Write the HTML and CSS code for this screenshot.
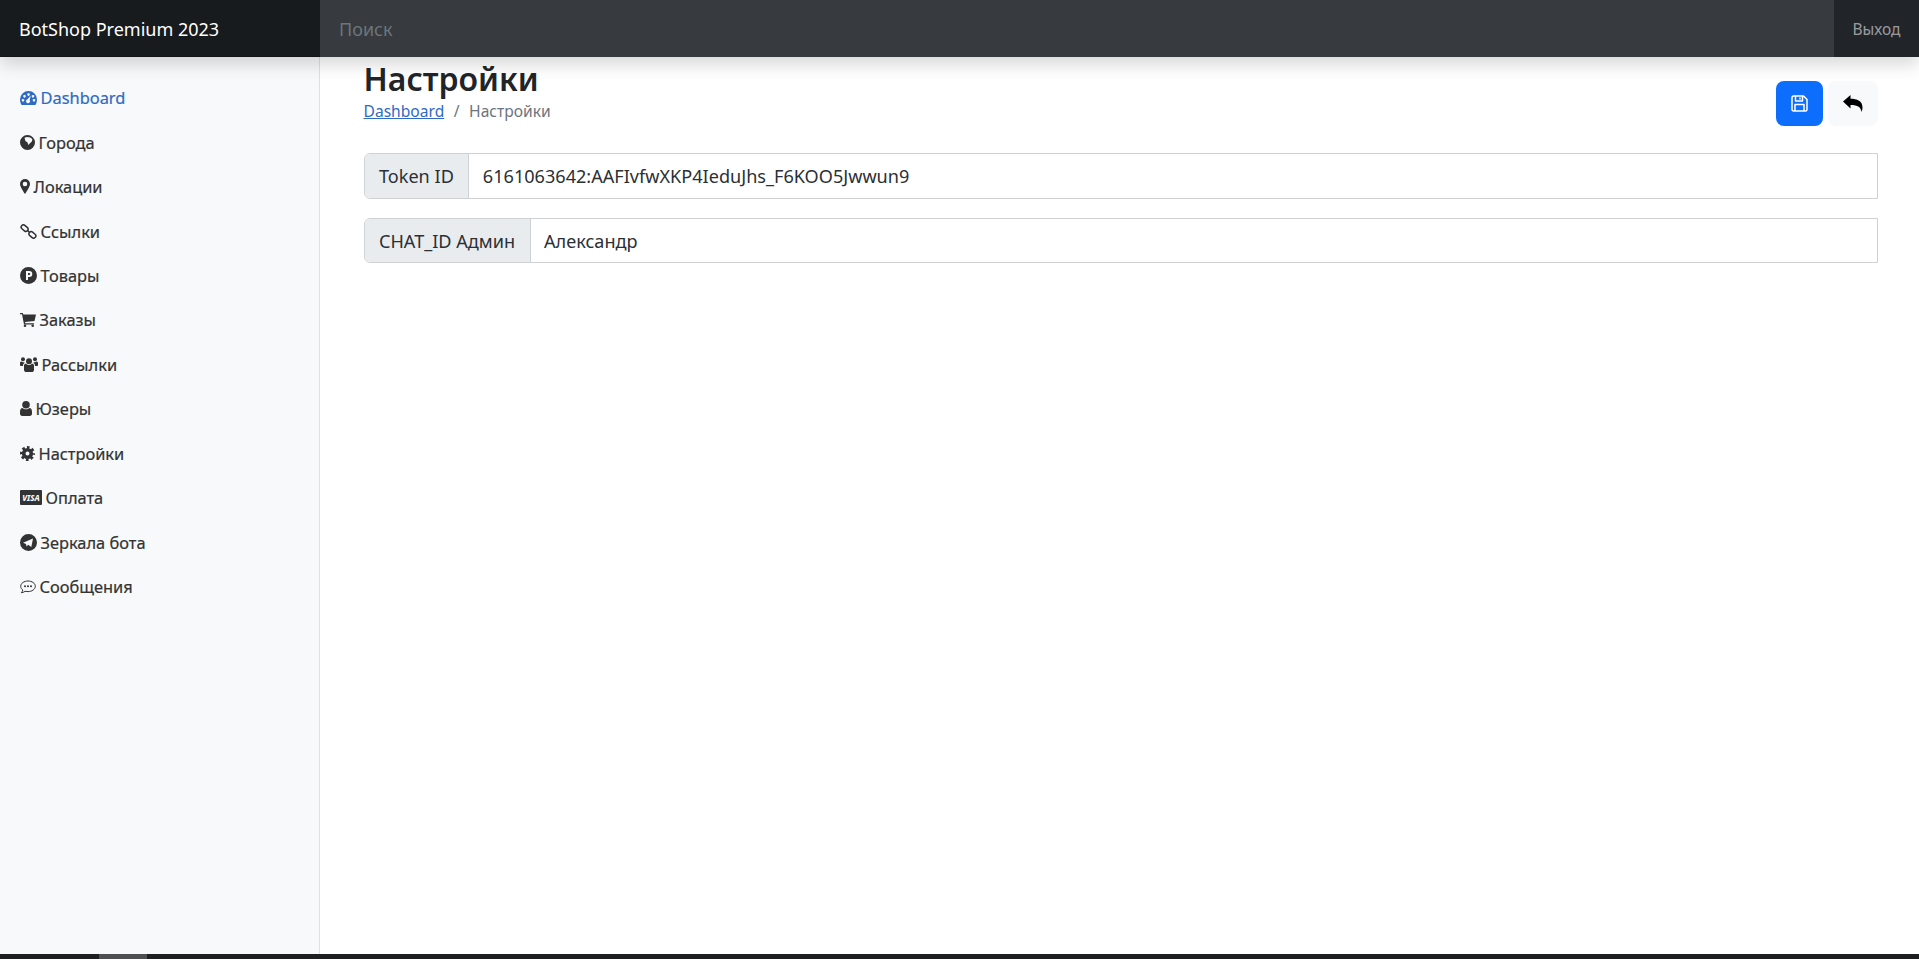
FILE: index.html
```html
<!DOCTYPE html>
<html lang="ru">
<head>
<meta charset="utf-8">
<title>BotShop Premium 2023</title>
<link rel="stylesheet" href="styles.css">
</head>
<body>
<div class="app">
  <header class="topbar">
    <a class="brand" href="#">BotShop Premium 2023</a>
    <input class="search" type="text" placeholder="Поиск">
    <a class="logout" href="#">Выход</a>
  </header>
  <div class="body">
    <nav class="sidebar">
      <a class="nav-link active" href="#"><svg width="17" height="14" viewBox="0 0 17 14"><path fill-rule="evenodd" d="M8.500 0A8.500 8.500 0 0 0 0 8.500c0 2 .6 3.900 1.600 5.500h13.800c1-1.600 1.600-3.500 1.600-5.500A8.500 8.500 0 0 0 8.500 0zM8 2.300a1.300 1.300 0 1 0 1.100 0zM4 4a1.300 1.300 0 1 0 1 0zM12.500 4a1.300 1.300 0 1 0 1 0zM2.500 8a1.300 1.300 0 1 0 1 0zM13.500 8a1.300 1.300 0 1 0 1 0zM10.800 4.500L7.500 8.300a2 2 0 1 0 2.200 .8z"/></svg><span>Dashboard</span></a>
      <a class="nav-link" href="#"><svg width="15" height="15" viewBox="0 0 15 15"><path fill-rule="evenodd" d="M7.500 0a7.500 7.500 0 1 0 0 15 7.500 7.500 0 0 0 0-15zM4.500 2.800c1-.6 2-.9 3-.9 2 0 3.500.8 4.700 2.200.4 1.500-.5 3-2 4l-2 1.800-.6-2.300-2.200-1.600z"/></svg><span>Города</span></a>
      <a class="nav-link" href="#"><svg width="10" height="15" viewBox="0 0 10 15"><path fill-rule="evenodd" d="M5 0a5 5 0 0 0-5 5c0 2.200 3.200 7.500 5 10 1.800-2.500 5-7.800 5-10a5 5 0 0 0-5-5zM5 2.700a2.300 2.300 0 1 1 0 4.600 2.300 2.300 0 0 1 0-4.600z"/></svg><span>Локации</span></a>
      <a class="nav-link" href="#"><svg width="17" height="15" viewBox="0 0 17 15"><g fill="none" stroke="currentColor" stroke-width="1.500"><rect x="0.800" y="1.900" width="7.600" height="4.400" rx="2.200" transform="rotate(40 4.600 4.100)"/><rect x="8.600" y="8.700" width="7.600" height="4.400" rx="2.200" transform="rotate(40 12.400 10.900)"/></g><path fill="none" stroke="currentColor" stroke-width="1.500" d="M7.500 6.400l2 1.800"/></svg><span>Ссылки</span></a>
      <a class="nav-link" href="#"><svg width="17" height="17" viewBox="0 0 17 17"><path fill-rule="evenodd" d="M8.500 0a8.500 8.500 0 1 0 0 17 8.500 8.500 0 0 0 0-17zM6 4h3.300a3 3 0 0 1 0 6H8v3H6zM8 6v2h1.200a1 1 0 0 0 0-2z"/></svg><span>Товары</span></a>
      <a class="nav-link" href="#"><svg width="16" height="14" viewBox="0 0 16 14"><path d="M0 0h2.800l.5 1.500H16l-1.500 6.500-9.500 1 .3 1.200H14v1.300H4L2 1.300H0z"/><circle cx="5" cy="12.700" r="1.300"/><circle cx="12.700" cy="12.700" r="1.300"/></svg><span>Заказы</span></a>
      <a class="nav-link" href="#"><svg width="18" height="15" viewBox="0 0 18 15"><circle cx="9" cy="4.200" r="3"/><circle cx="3" cy="2.300" r="2"/><circle cx="15" cy="2.300" r="2"/><path d="M4 8.500c0-1.200 1-1.700 2-1.700C7 7.800 8 8 9 8s2-.2 3-1.200c1 0 2 .5 2 1.700v4.200c0 1.500-1 2.300-2.300 2.300H6.300C5 15 4 14.200 4 12.700z"/><path d="M0 6c0-1 .7-1.500 1.500-1.500.6.500 1.300.8 2.100.8L5 5.800C3.500 6.500 3 7.500 2.900 9H1C.4 9 0 8.500 0 8zM18 6c0-1-.7-1.500-1.500-1.500-.6.500-1.300.8-2.100.8L13 5.800c1.500.7 2 1.700 2.100 3.200H17c.6 0 1-.5 1-1z"/></svg><span>Рассылки</span></a>
      <a class="nav-link" href="#"><svg width="12" height="15" viewBox="0 0 12 15"><circle cx="6" cy="3.800" r="3.800"/><path d="M2.500 7c.9.800 2.200 1.300 3.500 1.300S8.600 7.800 9.500 7C11 7.200 12 8.500 12 10.500v2.300c0 1.300-1 2.200-2.200 2.200H2.200C1 15 0 14.100 0 12.800v-2.300C0 8.500 1 7.200 2.500 7z"/></svg><span>Юзеры</span></a>
      <a class="nav-link" href="#"><svg width="15" height="15" viewBox="0 0 15 15"><circle cx="7.500" cy="7.500" r="6.200" fill="none" stroke="currentColor" stroke-width="2.600" stroke-dasharray="2.600 2.270" stroke-dashoffset="1.300"/><circle cx="7.500" cy="7.500" r="3.800" fill="none" stroke="currentColor" stroke-width="3.600"/></svg><span>Настройки</span></a>
      <a class="nav-link" href="#"><svg width="22" height="15" viewBox="0 0 22 15"><rect width="22" height="15" rx="1"/><text class="visa" x="11" y="10.500" text-anchor="middle">VISA</text></svg><span>Оплата</span></a>
      <a class="nav-link" href="#"><svg width="17" height="17" viewBox="0 0 17 17"><path fill-rule="evenodd" d="M8.500 0a8.500 8.500 0 1 0 0 17 8.500 8.500 0 0 0 0-17zM3 8.700l10-4.200-1.700 8.500-3.100-2.200-1.700 1.700-.5-2.600z"/></svg><span>Зеркала бота</span></a>
      <a class="nav-link" href="#"><svg width="16" height="16" viewBox="0 0 16 16"><path fill="none" stroke="currentColor" stroke-width="1" d="M8 2C4 2 .7 4.300.7 7.300c0 1.500.8 2.800 2.100 3.700-.2 1-.8 2-1.500 2.700 1.400 0 2.900-.7 3.800-1.400.9.200 1.900.3 2.900.3 4 0 7.300-2.300 7.300-5.300S12 2 8 2z"/><circle cx="5" cy="7.300" r="1"/><circle cx="8" cy="7.300" r="1"/><circle cx="11" cy="7.300" r="1"/></svg><span>Сообщения</span></a>
    </nav>
    <main class="content">
      <div class="page-head">
        <div>
          <h1 class="title">Настройки</h1>
          <div class="crumbs"><a href="#">Dashboard</a><span class="sep">/</span><span class="current">Настройки</span></div>
        </div>
        <div class="actions">
          <button class="btn btn-save" type="button" aria-label="Сохранить"><svg width="17" height="17" viewBox="0 0 17 17"><path fill="none" stroke="currentColor" stroke-width="1.500" stroke-linejoin="round" d="M1 2.500C1 1.600 1.600 1 2.500 1h10L16 4.500v10c0 .9-.6 1.500-1.500 1.500h-12C1.600 16 1 15.400 1 14.500zM4.500 1v5h7V1M9 2.500v2M4 16V9.500h9V16"/></svg></button>
          <button class="btn btn-back" type="button" aria-label="Назад"><svg width="20" height="17" viewBox="0 0 20 17"><path d="M0 6.500L7.500 0v3.800c6.500 0 12 2.200 12 8.700 0 1.700-.5 3.200-1.300 4.500.2-4.800-3.500-7-10.700-7V13.500z"/></svg></button>
        </div>
      </div>
      <div class="field"><label class="field-label">Token ID</label><input class="field-input" type="text" value="6161063642:AAFIvfwXKP4IeduJhs_F6KOO5Jwwun9"></div>
      <div class="field field-short"><label class="field-label">CHAT_ID Админ</label><input class="field-input" type="text" value="Александр"></div>
    </main>
  </div>
  <div class="hbar"><div class="hbar-thumb"></div></div>
</div>
</body>
</html>
```
FILE: styles.css
```css
* { box-sizing: border-box; }
html, body { margin: 0; height: 100%; overflow: hidden; }
body { font-family: "Noto Sans", "Open Sans", sans-serif; color: #212529; background: #fff; }
.app { height: 100vh; display: flex; flex-direction: column; }

.topbar { position: relative; z-index: 2; flex: 0 0 57px; display: flex; background: #212529; box-shadow: 0 8px 16px rgba(0,0,0,.15); }
.brand { flex: 0 0 320px; display: flex; align-items: center; padding-left: 19px; background: #181b1e; color: #fff; font-size: 18px; text-decoration: none; box-shadow: inset 0 -1px 0 rgba(0,0,0,.25); }
.search { flex: 1; min-width: 0; border: 0; outline: 0; padding: 0 19px; background: #373a3e; color: #fff; font: inherit; font-size: 18px; }
.search::placeholder { color: #6c757d; opacity: 1; }
.logout { flex: 0 0 85px; display: flex; align-items: center; justify-content: center; color: rgba(255,255,255,.55); font-size: 15.500px; text-decoration: none; }

.body { flex: 1; min-height: 0; display: flex; }
.sidebar { flex: 0 0 320px; padding-top: 18.500px; background: #f8f9fa; border-right: 1px solid #dfe0e1; display: flex; flex-direction: column; }
.nav-link { flex: 0 0 44.450px; display: flex; align-items: center; gap: 4px; padding-left: 19.500px; color: #333; font-size: 16.400px; font-weight: 400; -webkit-text-stroke: .2px currentColor; text-decoration: none; }
.nav-link svg { fill: currentColor; flex: none; stroke-width: 0; }
.nav-link.active { color: #2f6ac4; }
.visa { fill: #f8f9fa; font-size: 8px; font-weight: 800; font-style: italic; }

.content { flex: 1; min-width: 0; padding: 0 41px 0 43.500px; }
.page-head { display: flex; justify-content: space-between; align-items: flex-start; height: 96px; }
.title { margin: 0; font-size: 32px; line-height: 44px; font-weight: 600; }
.crumbs { font-size: 15.600px; line-height: 21px; display: flex; gap: 9.500px; color: #6c757d; }
.crumbs a { color: #2f6ac4; }
.actions { display: flex; gap: 5px; margin-top: 24px; }
.btn { border: 0; border-radius: 8px; height: 45px; padding: 0; display: flex; align-items: center; justify-content: center; }
.btn-save { width: 47px; background: #0d6efd; color: #fff; }
.btn-back { width: 50px; background: #f8f9fa; color: #000; }

.field { display: flex; height: 46px; margin-bottom: 19px; border: 1px solid #cfd1d3; border-radius: 6px 0 0 6px; overflow: hidden; font-size: 18.100px; }
.field-short { height: 45px; }
.field-label { display: flex; align-items: center; padding: 0 14.500px; background: #e9ecef; border-right: 1px solid #cfd1d3; color: #2b3035; white-space: nowrap; }
.field-input { flex: 1; min-width: 0; border: 0; outline: 0; padding: 0 13.500px; font: inherit; color: #2b3035; background: #fff; }

.hbar { flex: 0 0 5px; background: #1d1f21; display: flex; padding-left: 99px; }
.hbar-thumb { width: 48px; background: #4d4f51; }
```
